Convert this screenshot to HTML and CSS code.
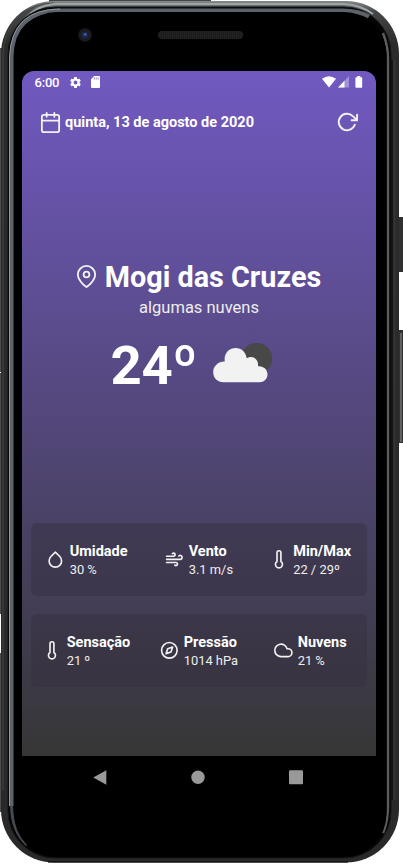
FILE: index.html
```html
<!DOCTYPE html>
<html lang="pt-BR">
<head>
<meta charset="utf-8">
<title>Clima</title>
<link rel="stylesheet" href="styles.css">
</head>
<body>
<div class="phone">
  <svg class="frame" viewBox="0 0 403 864" width="403" height="864">
    <defs>
      <linearGradient id="rim" x1="0" x2="0" y1="0" y2="1"><stop offset="0" stop-color="#858a8c"/><stop offset=".012" stop-color="#454749"/><stop offset=".05" stop-color="#2b2b2b"/><stop offset="1" stop-color="#292929"/></linearGradient>
    </defs>
    <path d="M0 48h2v324H0zM0 373h2v241H0zM0 653h2v159H0z" fill="#4d4d4d"/>
    <path d="M49 0h162v3H49z" fill="#444"/>
    <path d="M398 217h5v55h-4v6h-1zM398 330h5v113h-5z" fill="#303030"/>
    <path d="M401 333v109" stroke="#626262" stroke-width="2"/>
    <rect x="1" y="1" width="398" height="861.500" rx="53" fill="url(#rim)"/>
    <path d="M3 790V54A51 51 0 0 1 54 3" stroke="#444" stroke-width="1" fill="none"/>
    <path d="M25 19Q38 4 58 4H342Q359 4 373 14" stroke="#a0a5a7" stroke-width="2" fill="none"/>
    <rect x="8" y="7" width="383" height="851" rx="47" fill="#050505" stroke="#151515"/>
    <path d="M11.500 806V56Q13 12 59 10.500H342Q360 11 369 16.500" fill="none" stroke="#5c636b" stroke-width="4"/>
    <path d="M9.500 806V56Q12 9 60 9" fill="none" stroke="#8f969e" stroke-width="1"/>
    <path d="M11.500 806Q12 831 27 845" fill="none" stroke="#454a51" stroke-width="3"/>
    <path d="M383 33Q388 46 388 59V806Q388 821 383 833" fill="none" stroke="#5b5c5e" stroke-width="2.500"/>
    <path d="M392 60V800" stroke="#101010" stroke-width="1.500"/>
    <path d="M394.500 60V800" stroke="#373737" stroke-width="1.500"/>
    <rect x="14" y="12" width="372.500" height="845" rx="43" fill="#000"/>
    <path d="M48 862H348" stroke="#000"/>
  </svg>
  <div class="bezel">
    <svg class="camera" viewBox="0 0 14 14"><circle cx="7" cy="7" r="6.800" fill="#1b1b1d"/><circle cx="7" cy="7" r="3.800" fill="#1b2345"/><circle cx="7" cy="6.500" r="1.700" fill="#354782"/><circle cx="7.500" cy="6" r=".6" fill="#8498cb"/></svg>
    <div class="speaker"></div>
  </div>
  <main class="screen">
    <div class="status">
      <span class="clock">6:00</span>
      <svg class="gear" viewBox="0 0 24 24"><path d="M19.400 13c.1-.7.1-1.300 0-2l2.100-1.600c.2-.2.3-.4.1-.7l-2-3.400c-.1-.2-.4-.3-.6-.2l-2.500 1a7 7 0 0 0-1.700-1L14.500 2.400c0-.2-.2-.4-.5-.4h-4c-.3 0-.5.2-.5.400L9.200 5.100a7 7 0 0 0-1.700 1L5 5.100c-.2-.1-.5 0-.6.2l-2 3.400c-.2.3-.1.5.1.7L4.600 11c-.1.700-.1 1.300 0 2l-2.100 1.600c-.2.2-.3.400-.1.700l2 3.400c.1.200.4.300.6.200l2.500-1c.5.400 1.100.800 1.700 1l.3 2.700c0 .2.200.4.500.4h4c.3 0 .5-.2.500-.4l.3-2.700c.6-.2 1.200-.6 1.700-1l2.500 1c.2.1.5 0 .6-.2l2-3.400c.2-.3.1-.5-.1-.7zM12 15.500a3.500 3.500 0 1 1 0-7 3.500 3.500 0 0 1 0 7z"/></svg>
      <svg class="sd" viewBox="0 0 9 12"><path d="M3.200 0H8Q9 0 9 1V11Q9 12 8 12H1Q0 12 0 11V3.200z"/><path d="M3.300 1.500v2M5.200 1.500v2M7.100 1.500v2" stroke="#7159c1" stroke-width=".8"/></svg>
      <svg class="signals" viewBox="0 0 41 12"><path d="M0 2.800Q7-2.200 14 2.800L7 11.500z"/><path d="M27 0V11.500H16z" opacity=".35"/><path d="M22.500 4.700V11.500H16z"/><path d="M35.300 0h3v1.200h1.200q.7 0 .7.700v9q0 .8-.7.800h-5.300q-.8 0-.8-.8V1.900q0-.7.800-.7h1.100z"/></svg>
    </div>
    <header class="header">
      <svg class="icon calendar" viewBox="0 0 24 24"><rect x="3" y="4" width="18" height="18" rx="2"/><path d="M16 2v4M8 2v4M3 10h18"/></svg>
      <span class="date">quinta, 13 de agosto de 2020</span>
      <svg class="icon refresh" viewBox="0 0 24 24"><path d="M23 4v6h-6"/><path d="M20.490 15a9 9 0 1 1-2.120-9.360L23 10"/></svg>
    </header>
    <section class="current">
      <div class="place">
        <svg class="icon pin" viewBox="0 0 24 24"><path d="M21 10c0 7-9 13-9 13s-9-6-9-13a9 9 0 0 1 18 0z"/><circle cx="12" cy="10" r="3"/></svg>
        <h1 class="city">Mogi das Cruzes</h1>
      </div>
      <p class="description">algumas nuvens</p>
      <div class="reading">
        <span class="temp">24º</span>
        <svg class="weather" viewBox="0 0 60 40"><circle cx="43.500" cy="15.500" r="15.700" fill="#484848"/><path d="M10.500 39.200C4.500 39.200.2 35 .2 29.200S5 18.500 11.800 18.600C10.500 10.500 16 5 22.700 5c5.500 0 10.200 4 11 10.200C40 11.500 46 16.500 45 23.200c5.500-.5 9.500 3.300 9.500 8s-3.500 8-8 8z" fill="#f2f2f2"/></svg>
      </div>
    </section>
    <section class="cards">
      <div class="card card-one">
        <div class="item"><svg class="icon" viewBox="0 0 24 24"><path d="M12 2.690l5.660 5.660a8 8 0 1 1-11.310 0z"/></svg><div><h2>Umidade</h2><p>30 %</p></div></div>
        <div class="item"><svg class="icon" viewBox="0 0 24 24"><path d="M9.590 4.590A2 2 0 1 1 11 8H2m10.590 11.410A2 2 0 1 0 14 16H2m15.730-8.270A2.500 2.500 0 1 1 19.500 12H2"/></svg><div><h2>Vento</h2><p>3.1 m/s</p></div></div>
        <div class="item"><svg class="icon" viewBox="0 0 24 24"><path d="M14 14.760V3.500a2.500 2.500 0 0 0-5 0v11.260a4.500 4.500 0 1 0 5 0z"/></svg><div><h2>Min/Max</h2><p>22 / 29º</p></div></div>
      </div>
      <div class="card card-two">
        <div class="item"><svg class="icon" viewBox="0 0 24 24"><path d="M14 14.760V3.500a2.500 2.500 0 0 0-5 0v11.260a4.500 4.500 0 1 0 5 0z"/></svg><div><h2>Sensação</h2><p>21 º</p></div></div>
        <div class="item"><svg class="icon" viewBox="0 0 24 24"><circle cx="12" cy="12" r="10"/><path d="M16.240 7.760l-2.120 6.360-6.360 2.120 2.120-6.360z"/></svg><div><h2>Pressão</h2><p>1014 hPa</p></div></div>
        <div class="item"><svg class="icon" viewBox="0 0 24 24"><path d="M18 10h-1.260A8 8 0 1 0 9 20h9a5 5 0 0 0 0-10z"/></svg><div><h2>Nuvens</h2><p>21 %</p></div></div>
      </div>
    </section>
  </main>
  <nav class="nav">
    <svg viewBox="0 0 14 15"><path d="M13.300.3V14.700L.3 7.500z"/></svg>
    <svg viewBox="0 0 14 15"><circle cx="7" cy="7.300" r="6.700"/></svg>
    <svg viewBox="0 0 14 15"><rect x="0" y=".3" width="14" height="14" rx="1"/></svg>
  </nav>
</div>
</body>
</html>
```
FILE: styles.css
```css
* { box-sizing: border-box; }
body {
  margin: 0;
  background: #fff;
  font-family: Roboto, sans-serif;
  color: #fff;
}
h1, h2, p { margin: 0; }
svg { display: block; flex: none; }
.phone {
  position: relative;
  width: 403px;
  height: 864px;
  overflow: hidden;
}
.frame { position: absolute; inset: 0; z-index: -1; }
.bezel {
  height: 71px;
  padding: 28px 0 0 78px;
  display: flex;
  align-items: flex-start;
}
.camera { width: 14px; height: 14px; }
.speaker {
  width: 85px;
  height: 8px;
  margin: 3px 0 0 66px;
  border-radius: 4px;
  background: repeating-linear-gradient(90deg, #222 0 1px, #1b1d1d 1px 2px);
}
.screen {
  width: 354px;
  height: 684.500px;
  margin-left: 22px;
  border-radius: 12px 12px 0 0;
  background: linear-gradient(#7159c1, #363636);
  display: flex;
  flex-direction: column;
}
.status {
  height: 22px;
  padding: 0 13px 0 12.500px;
  display: flex;
  align-items: center;
  fill: #fff;
}
.clock { width: 34.500px; font-size: 13px; font-weight: 500; letter-spacing: -.2px; }
.gear { width: 13px; height: 13px; }
.sd { width: 9px; height: 12px; margin-left: 8.500px; }
.signals { width: 41px; height: 12px; margin-left: auto; }
.icon {
  width: 18.700px;
  height: 18.700px;
  overflow: visible;
  fill: none;
  stroke: #f2f2f2;
  stroke-width: 2.100;
  stroke-linecap: round;
  stroke-linejoin: round;
}
.header {
  height: 58px;
  padding: 0 18px 0 17px;
  display: flex;
  align-items: center;
}
.calendar { width: 23px; height: 23px; stroke-width: 1.900; }
.date { margin-left: 3px; padding-top: 1px; font-size: 14.500px; font-weight: 700; white-space: nowrap; }
.refresh { width: 22px; height: 22px; margin-left: auto; }
.current {
  margin-top: 106px;
  display: flex;
  flex-direction: column;
  align-items: center;
}
.place { display: flex; align-items: center; margin-right: 2px; }
.pin { width: 23px; height: 23px; margin: -2px 7px 0 0; stroke-width: 1.900; }
.city { padding-top: 1px; font-size: 28.800px; line-height: 39px; font-weight: 700; white-space: nowrap; }
.description { margin: 1px 0 0; font-size: 16.500px; line-height: 20px; color: #eee; }
.reading { margin: 16px 15px 0 0; display: flex; height: 60px; }
.temp { width: 102px; font-size: 54.500px; line-height: 62px; font-weight: 700; letter-spacing: -.3px; }
.weather { width: 60px; height: 40px; margin-top: 9px; }
.cards { margin: auto 9px 69px; display: grid; gap: 18px; }
.card {
  height: 73px;
  padding-left: 12px;
  border-radius: 6px;
  background: rgba(50, 46, 60, .4);
  display: grid;
  align-items: center;
}
.card-one { padding-left: 15px; grid-template-columns: 119px 104.500px 1fr; }
.card-two { grid-template-columns: 117px 114px 1fr; }
.item { display: flex; align-items: center; gap: 5px; white-space: nowrap; }
.item div { padding-top: 4px; }
.item h2 { font-size: 14.500px; line-height: 18px; font-weight: 700; }
.item p { font-size: 12.900px; line-height: 18px; color: #eee; }
.nav {
  height: 43px;
  padding: 0 73px 0 71px;
  margin: 0 27px 0 22px;
  display: flex;
  align-items: center;
  justify-content: space-between;
  fill: #999;
}
.nav svg { width: 14px; height: 15px; }
```
